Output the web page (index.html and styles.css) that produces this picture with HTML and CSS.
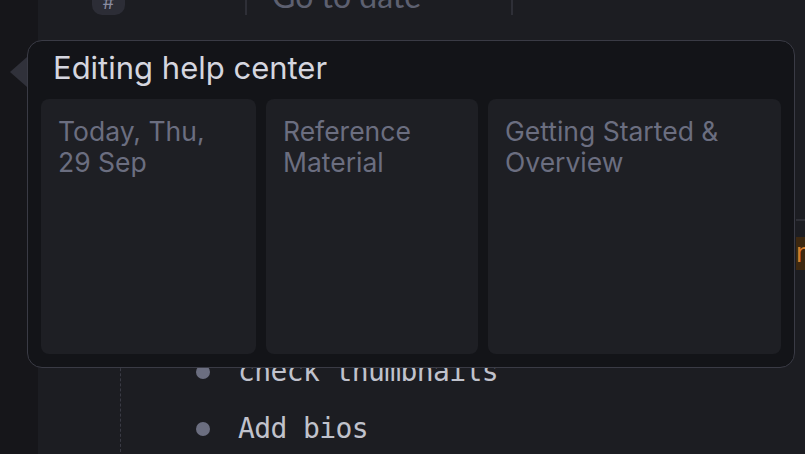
FILE: index.html
```html
<!DOCTYPE html>
<html lang="en">
<head>
  <meta charset="UTF-8">
  <meta name="viewport" content="width=device-width, initial-scale=1.0">
  <title>Journal</title>
  <link rel="stylesheet" href="styles.css">
</head>
<body>

  <div class="app">
    <!-- Left rail -->
    <aside class="rail"></aside>

    <!-- Main document -->
    <main class="main">
      <div class="doc">
        <div class="topbar">
          <span class="tag-badge">#</span>
          <span class="divider divider-first"></span>
          <span class="goto">Go to date</span>
          <span class="divider"></span>
        </div>

        <ul class="outline">
          <li><span class="dot"></span>check thumbnails</li>
          <li><span class="dot"></span>Add bios</li>
        </ul>
      </div>

      <!-- Right side pane, mostly offscreen -->
      <div class="sidepane">
        <div class="side-rule"></div>
        <div class="side-tag">n</div>
      </div>
    </main>
  </div>

  <!-- Popover over the document -->
  <div class="popover">
    <span class="popover-arrow"></span>
    <h2 class="popover-title">Editing help center</h2>
    <div class="cards">
      <div class="card card-a">Today, Thu, 29 Sep</div>
      <div class="card card-b">Reference Material</div>
      <div class="card card-c">Getting Started &amp; Overview</div>
    </div>
  </div>

</body>
</html>
```

FILE: styles.css
```css
body {
  margin: 0;
  padding: 0;
  width: 805px;
  height: 454px;
  overflow: hidden;
  position: relative;
  background-color: #1c1d22;
  font-family: Inter, "Noto Sans", sans-serif;
}

.app {
  display: flex;
  height: 454px;
  overflow: hidden;
}

.rail {
  width: 38px;
  flex-shrink: 0;
  background-color: #16161a;
}

.main {
  flex: 1;
  display: flex;
  background-color: #1c1d22;
}

.doc {
  width: 758px;
  flex-shrink: 0;
  height: 454px;
  overflow: hidden;
}

/* Top bar */
.topbar {
  display: flex;
  align-items: center;
  height: 32px;
  margin-top: -17px;
  padding-left: 54px;
}

.tag-badge {
  width: 33px;
  height: 32px;
  border-radius: 10px;
  background-color: #2c2d36;
  color: #8a8ca0;
  font-size: 18px;
  display: flex;
  align-items: center;
  justify-content: center;
  padding-top: 6px;
  box-sizing: border-box;
}

.divider {
  width: 2px;
  height: 32px;
  background-color: #2e2f37;
}

.divider-first {
  margin-left: 120px;
}

.goto {
  width: 239px;
  font-family: Lato, sans-serif;
  font-size: 32px;
  color: #5d6070;
  margin-left: 25px;
  margin-bottom: 6px;
  line-height: 32px;
  white-space: nowrap;
}

/* Outline list */
.outline {
  list-style: none;
  margin: 328px 0 0 82px;
  padding: 0;
  border-left: 1.5px dashed #3a3b45;
}

.outline li {
  display: flex;
  align-items: center;
  height: 57px;
  font-family: "DejaVu Sans Mono", monospace;
  font-size: 28px;
  letter-spacing: -0.6px;
  color: #c0c2cc;
}

.dot {
  width: 14px;
  height: 14px;
  border-radius: 50%;
  background-color: #6b6e80;
  margin-left: 75px;
  margin-right: 28px;
}

/* Side pane */
.sidepane {
  flex: 1;
  padding-top: 219px;
}

.side-rule {
  height: 2px;
  background-color: #2e2f36;
}

.side-tag {
  margin-top: 16px;
  height: 33px;
  background-color: #3d2810;
  color: #d47c2c;
  font-size: 26px;
  line-height: 31px;
  overflow: hidden;
}

/* Popover */
.popover {
  position: absolute;
  left: 27px;
  top: 40px;
  width: 768px;
  height: 328px;
  box-sizing: border-box;
  border: 1.5px solid #3a3b45;
  border-radius: 15px;
  background-color: #131418;
  padding: 0 13px 13px 13px;
  display: flex;
  flex-direction: column;
}

.popover-arrow {
  position: absolute;
  left: -18px;
  top: 16px;
  width: 0;
  height: 0;
  border-top: 15px solid transparent;
  border-bottom: 15px solid transparent;
  border-right: 17px solid #30313a;
}

.popover-title {
  margin: 0;
  padding-left: 12px;
  height: 58px;
  font-size: 31px;
  font-weight: 400;
  line-height: 54px;
  color: #d5d6df;
}

.cards {
  flex: 1;
  display: flex;
  gap: 10px;
}

.card {
  background-color: #1e1f24;
  border-radius: 8px;
  padding: 17px 17px;
  font-size: 26.5px;
  line-height: 31px;
  color: #6b6e80;
  box-sizing: border-box;
}

.card-a {
  width: 215px;
}

.card-b {
  width: 212px;
}

.card-c {
  width: 293px;
}
```
